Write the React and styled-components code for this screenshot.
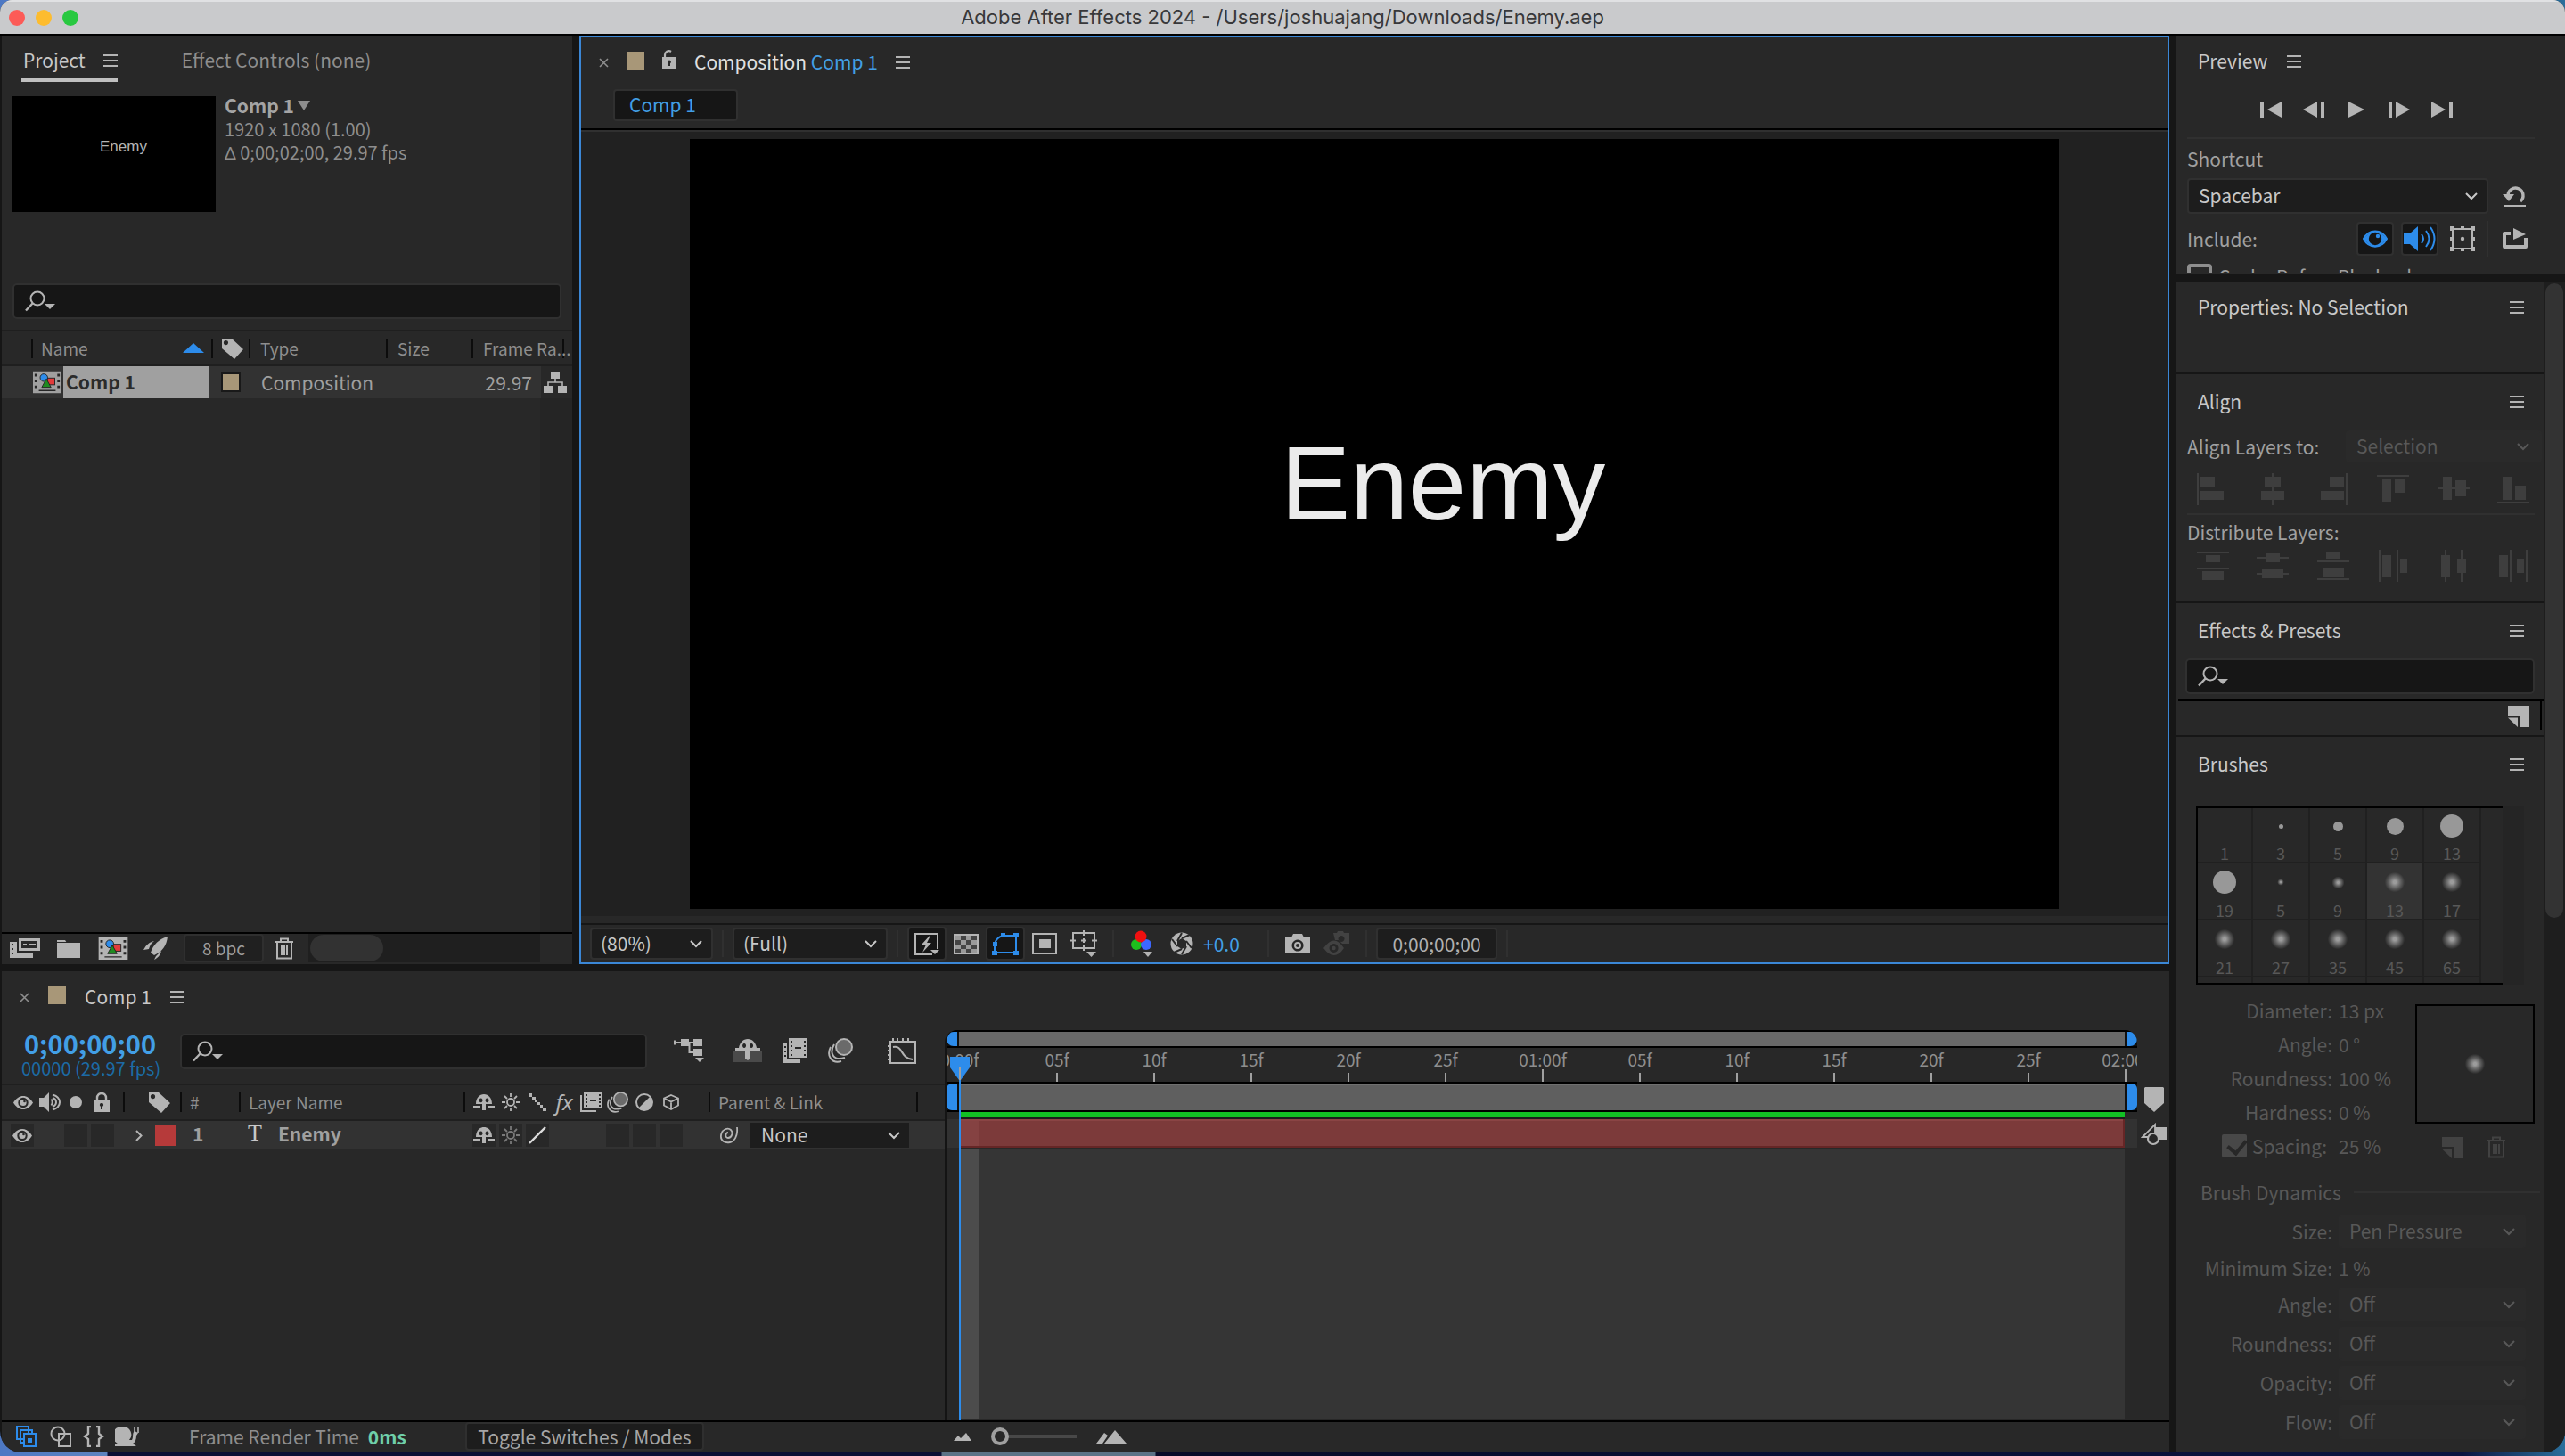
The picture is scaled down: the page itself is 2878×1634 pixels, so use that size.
import React from "react";
import styled, { createGlobalStyle, css } from "styled-components";

const c = {
  frame: "#161616",
  panel: "#282828",
  well: "#161616",
  field: "#1d1d1d",
  edge: "#303030",
  row: "#323232",
  text: "#c8c8c8",
  label: "#a0a0a0",
  dim: "#8e8e8e",
  off: "#585858",
  icon: "#b4b4b4",
  blue: "#2d8ceb",
  link: "#429fe6",
  sand: "#a89778",
};

const Global = createGlobalStyle`
  * { box-sizing: border-box; }
  html, body, #root { height: 100%; }
  body {
    margin: 0;
    overflow: hidden;
    background: linear-gradient(90deg, #4d78c4 0, #5d84c0 120px, #0a0f35 121px, #0a0f35 1056px, #5b7387 1057px, #5b7387 1296px, #070b28 1297px, #0a1440 96%, #2a6f9c 100%);
    font: 21px/28px "Noto Sans CJK SC", "Noto Sans", sans-serif;
    color: ${c.label};
  }
  button, input, select { font: inherit; color: inherit; margin: 0; padding: 0; border: 0; background: none; outline: 0; }
  button { line-height: 28px; text-align: left; white-space: nowrap; }
  svg { display: block; flex: none; }
`;

/* ---------- window ---------- */
const Window = styled.div`
  height: calc(100vh - 4px);
  display: flex;
  flex-direction: column;
  background: ${c.frame};
  border-radius: 14px 14px 24px 24px;
  overflow: hidden;
`;
const TitleBar = styled.header`
  flex: none;
  height: 40px;
  display: grid;
  grid-template-columns: 1fr auto 1fr;
  align-items: center;
  padding: 0 10px;
  background: #c9cacc;
  border-top: 2px solid #e0e1e3;
  border-bottom: 2px solid #000;
`;
const Lights = styled.div`
  display: flex;
  gap: 12px;
`;
const Light = styled.button`
  width: 18px;
  height: 18px;
  border-radius: 50%;
  background: ${(p) => p.$color};
`;
const Title = styled.h1`
  margin: 0;
  padding-bottom: 2px;
  font: 400 22px/28px Inter, "Liberation Sans", sans-serif;
  color: #38383a;
`;
const Workspace = styled.div`
  flex: 1;
  min-height: 0;
  display: grid;
  grid-template-columns: minmax(0, 1fr) 436px;
  gap: 8px;
  padding-left: 2px;
`;
const MainArea = styled.div`
  min-height: 0;
  display: grid;
  grid-template-rows: minmax(0, 1042fr) minmax(0, 540fr);
  gap: 8px;
`;
const TopRow = styled.div`
  min-height: 0;
  display: grid;
  grid-template-columns: 640px minmax(0, 1fr);
  gap: 8px;
`;
const Panel = styled.section`
  background: ${c.panel};
  display: flex;
  flex-direction: column;
  min-width: 0;
  min-height: 0;
  ${(p) => p.$active && css`border: 2px solid #3b87d6;`}
`;

/* ---------- shared parts ---------- */
const Header = styled.div`
  flex: none;
  height: ${(p) => p.$h || 58}px;
  display: flex;
  align-items: center;
  padding: ${(p) => p.$pad || "0 22px 0 24px"};
  gap: ${(p) => p.$gap || "22px"};
`;
const Heading = styled.h2`
  margin: 0;
  padding-bottom: 3px;
  font-size: 21px;
  font-weight: 400;
  line-height: 28px;
  color: ${c.text};
  ${(p) => p.$grow && css`flex: 1;`}
`;
const PlainButton = styled.button`
  flex: none;
  display: flex;
  align-items: center;
  justify-content: center;
  width: ${(p) => p.$w || "auto"};
  height: ${(p) => p.$h || "auto"};
  color: ${(p) => p.$color || c.icon};
`;
const ToolButton = styled.button`
  flex: none;
  display: flex;
  align-items: center;
  justify-content: center;
  width: ${(p) => p.$w || 44}px;
  height: 38px;
  border-radius: 4px;
  border: 2px solid ${(p) => (p.$on ? c.edge : "transparent")};
  background: ${(p) => (p.$on ? c.well : "none")};
  color: ${(p) => p.$color || c.icon};
`;
const Swatch = styled.span`
  flex: none;
  width: ${(p) => p.$size || 20}px;
  height: ${(p) => p.$size || 20}px;
  margin-bottom: ${(p) => p.$lift || 0}px;
  background: ${(p) => p.$color || c.sand};
  ${(p) => p.$framed && css`border: 2px solid #191919;`}
`;
const SearchBox = styled.label`
  display: flex;
  align-items: center;
  gap: 8px;
  height: 40px;
  padding: 0 12px;
  background: ${c.well};
  border: 2px solid ${c.edge};
  border-radius: 5px;
  color: ${c.icon};
  margin: ${(p) => p.$m || "0"};
  ${(p) => p.$w && css`width: ${p.$w};`}
`;
const SearchInput = styled.input`
  flex: 1;
  min-width: 0;
  height: 28px;
`;
const SelectWrap = styled.span`
  display: grid;
  grid-template-columns: minmax(0, 1fr) 14px;
  align-items: center;
  height: ${(p) => p.$h || 36}px;
  padding-right: ${(p) => p.$end || 10}px;
  background: ${(p) => (p.$off ? "#2a2a2a" : c.field)};
  border: ${(p) => (p.$flat ? "0" : `2px solid ${p.$off ? "#2a2a2a" : c.edge}`)};
  border-radius: ${(p) => (p.$flat ? 0 : 4)}px;
  color: ${(p) => (p.$off ? c.off : c.text)};
  ${(p) => p.$w && css`width: ${p.$w}px;`}
  ${(p) => p.$grow && css`flex: 1;`}
`;
const NativeSelect = styled.select`
  appearance: none;
  grid-row: 1;
  grid-column: 1 / 3;
  height: 28px;
  line-height: 26px;
  padding: 0 0 2px ${(p) => p.$start || 10}px;
  &:disabled { opacity: 1; }
`;
const ChevronSlot = styled.span`
  grid-row: 1;
  grid-column: 2;
  pointer-events: none;
`;
const VSep = styled.span`
  flex: none;
  width: 2px;
  height: ${(p) => p.$h || 30}px;
  margin: 0 ${(p) => (p.$m === undefined ? 10 : p.$m)}px;
  background: ${c.edge};
`;
const Rule = styled.hr`
  border: 0;
  height: 2px;
  background: #303030;
  flex: ${(p) => (p.$grow ? 1 : "none")};
  margin: ${(p) => p.$m || "0"};
`;
const Strong = styled.b`
  display: block;
  padding-bottom: 4px;
  font-weight: 700;
`;

/* ---------- icons ---------- */
const Svg = ({ w, h, vb, children, ...rest }) => (
  <svg width={w} height={h} viewBox={vb || `0 0 ${w} ${h}`} fill="currentColor" aria-hidden="true" {...rest}>
    {children}
  </svg>
);
const MenuIcon = () => (
  <Svg w={16} h={14}>
    <path d="M0 0h16v2H0zM0 6h16v2H0zM0 12h16v2H0z" />
  </Svg>
);
const CloseIcon = () => (
  <Svg w={11} h={11}>
    <path d="M1 1l9 9M10 1l-9 9" stroke="#8e8e8e" strokeWidth="1.6" />
  </Svg>
);
const Chevron = () => (
  <Svg w={14} h={9}>
    <path d="M1 1l6 6 6-6" fill="none" stroke="currentColor" strokeWidth="2" />
  </Svg>
);
const SearchIcon = () => (
  <Svg w={34} h={24}>
    <circle cx="14" cy="9" r="7.5" fill="none" stroke="currentColor" strokeWidth="2" />
    <path d="M9 14L1 22.5" stroke="currentColor" strokeWidth="2.4" />
    <path d="M22 15h12l-6 6z" />
  </Svg>
);
const TagIcon = () => (
  <Svg w={24} h={24}>
    <path fillRule="evenodd" d="M0 1h11l13 12-10 11L0 12zM4.5 3a2.6 2.6 0 1 0 0 5.200 2.6 2.6 0 0 0 0-5.200z" />
  </Svg>
);
const FilmComp = ({ w, h }) => (
  <Svg w={w} h={h} vb="0 0 34 26">
    <path d="M0 0h34v26H0z" />
    <path d="M2 3h3v3H2zM2 10h3v3H2zM2 17h3v3H2zM29 3h3v3h-3zM29 10h3v3h-3zM29 17h3v3h-3zM7 22h20v1.500H7z" fill="#262626" />
    <rect x="17" y="8" width="9" height="8" fill="#e23b3b" stroke="#222" />
    <circle cx="13" cy="7.500" r="4.500" fill="#2d8ceb" stroke="#222" />
    <path d="M16 9l5.500 10h-11z" fill="#1f8a1f" stroke="#222" />
  </Svg>
);
const NetworkIcon = () => (
  <Svg w={26} h={24}>
    <path d="M8 0h10v8H8zM0 16h10v8H0zM16 16h10v8H16z" />
    <path d="M13 8v4M5 16v-4h16v4" fill="none" stroke="currentColor" strokeWidth="1.600" />
  </Svg>
);
const InterpretIcon = () => (
  <Svg w={34} h={24}>
    <path fillRule="evenodd" d="M10 1h24v14H10zM13 4v8h18V4z" />
    <path d="M15 7h4v2h-4zM21 7h8v2h-8z" />
    <path fillRule="evenodd" d="M0 5h8v13h18v5H0zM2 7v2h2V7zM2 12v2h2v-2zM2 17v2h2v-2z" />
  </Svg>
);
const FolderIcon = () => (
  <Svg w={26} h={21}>
    <path d="M0 1h9l2 3h15v17H0z" />
    <path d="M0 3.500h11" stroke="#282828" strokeWidth="1" />
  </Svg>
);
const RocketIcon = () => (
  <Svg w={28} h={26}>
    <path d="M27 0C17 3 11 9 8 18l4 3C21 17 26 10 27 0zM12 5C7 6 3 9 0 15l6-1c1-4 3-7 6-9zM12 26c4-2 7-5 8-10l-6 6z" />
  </Svg>
);
const TrashIcon = () => (
  <Svg w={22} h={25}>
    <path d="M7 4V1.500h8V4M1 5h20M3 6v17.500h16V6M8 9v11M11 9v11M14 9v11" fill="none" stroke="currentColor" strokeWidth="2" />
  </Svg>
);
const EyeIcon = () => (
  <Svg w={22} h={15}>
    <path fillRule="evenodd" d="M0 7.500C6-2.500 16-2.500 22 7.500 16 17.500 6 17.500 0 7.500zM11 1.800a5.700 5.700 0 1 0 0 11.400 5.700 5.700 0 0 0 0-11.400z" />
    <circle cx="11" cy="7.500" r="3.600" />
    <circle cx="12.500" cy="6" r="1.300" fill="#282828" />
  </Svg>
);
const BigEyeIcon = () => (
  <Svg w={28} h={20}>
    <path d="M1 10C7 -1.500 21 -1.500 27 10 21 21.500 7 21.500 1 10z" fill="none" stroke="currentColor" strokeWidth="2" />
    <path fillRule="evenodd" d="M1 10L8 3v14zM27 10l-7-7v14z" />
    <circle cx="14" cy="10" r="8" fill="#161616" stroke="currentColor" strokeWidth="1.600" />
    <circle cx="17" cy="7" r="2.200" />
  </Svg>
);
const SpeakerIcon = () => (
  <Svg w={24} h={22}>
    <path d="M0 6h5l6-6v22l-6-6H0z" />
    <path d="M13.500 7.500q2.500 3.500 0 7M15 2.500q8 2.500 8 8.500t-8 8.500M15 6q4 1.500 4 5t-4 5" fill="none" stroke="currentColor" strokeWidth="2" />
  </Svg>
);
const BigSpeakerIcon = () => (
  <Svg w={36} h={28}>
    <path d="M0 8h7l9-8v28l-9-8H0z" />
    <path d="M20 9q4 5 0 10M25 5q7 9 0 18M30 1q9 13 0 26" fill="none" stroke="currentColor" strokeWidth="2" />
  </Svg>
);
const LockIcon = () => (
  <Svg w={18} h={22}>
    <path d="M4 10V6a5 5 0 0 1 10 0v4" fill="none" stroke="currentColor" strokeWidth="2.400" />
    <path fillRule="evenodd" d="M0 9h18v13H0zM9 12a2 2 0 0 0-1 3.800V19h2v-3.200A2 2 0 0 0 9 12z" />
  </Svg>
);
const UnlockIcon = () => (
  <Svg w={16} h={28}>
    <path d="M3 9V6a4.500 4.500 0 0 1 7-4" fill="none" stroke="currentColor" strokeWidth="2.200" />
    <path fillRule="evenodd" d="M0 8h16v13H0zM8 11.500a2 2 0 0 0-1 3.700V18h2v-2.800a2 2 0 0 0-1-3.700z" />
  </Svg>
);
const DotIcon = () => (
  <Svg w={14} h={14}>
    <circle cx="7" cy="7" r="7" />
  </Svg>
);
const ShyIcon = () => (
  <Svg w={24} h={18}>
    <path fillRule="evenodd" d="M3 11C3 4 7 0 12 0s9 4 9 11h-7v7h-4v-7zM8.500 4.500a2 2.400 0 1 0 .1 0zM15.500 4.500a2 2.400 0 1 0 .1 0z" />
    <path d="M0 13h8v2H0zM16 13h8v2h-8z" />
  </Svg>
);
const ShyBigIcon = () => (
  <Svg w={32} h={26}>
    <path d="M0 14h32v12H0z" fill="#4a4a4a" />
    <path fillRule="evenodd" d="M6 10C7 4 11 0 16 0s9 4 10 10h4v3H19v9l-3 2-3-2v-9H2v-3zM12 5a2 2.500 0 1 0 .1 0zM20 5a2 2.500 0 1 0 .1 0z" />
  </Svg>
);
const SunIcon = () => (
  <Svg w={20} h={20}>
    <circle cx="10" cy="10" r="4" fill="none" stroke="currentColor" strokeWidth="1.800" />
    <path d="M10 0v4M10 16v4M0 10h4M16 10h4M3 3l3 3M14 14l3 3M17 3l-3 3M6 14l-3 3" stroke="currentColor" strokeWidth="1.800" />
  </Svg>
);
const StepsIcon = () => (
  <Svg w={20} h={20}>
    <path d="M0 0h4v4H0zM4 4h4v3H4zM7 7h3v3H7zM10 10h3v3h-3zM13 13h3v3h-3zM16 16h4v4h-4z" />
  </Svg>
);
const FilmIcon = () => (
  <Svg w={25} h={22}>
    <path d="M0 3h2v17h16v2H0z" />
    <path fillRule="evenodd" d="M4 0h21v18H4zM6 2v2h2V2zM6 6v2h2V6zM6 10v2h2v-2zM6 14v2h2v-2zM21 2v2h2V2zM21 6v2h2V6zM21 10v2h2v-2zM21 14v2h2v-2zM11 8v2h7V8z" />
  </Svg>
);
const FilmBigIcon = () => (
  <Svg w={28} h={28}>
    <path fillRule="evenodd" d="M0 6h5v18h15v4H0zM2 9v2h2V9zM2 14v2h2v-2zM2 19v2h2v-2z" />
    <path fillRule="evenodd" d="M7 0h21v22H7zM9 3v2h2V3zM9 8v2h2V8zM9 13v2h2v-2zM9 18v2h2v-2zM24 3v2h2V3zM24 8v2h2V8zM24 13v2h2v-2zM24 18v2h2v-2zM14 10v2h7v-2z" />
  </Svg>
);
const BlurIcon = ({ w = 26, h = 24 }) => (
  <Svg w={w} h={h} vb="0 0 28 28">
    <path d="M3 10C-2 20 4 29 15 26M7 7C1 17 6 26 19 22" fill="none" stroke="currentColor" strokeWidth="2" />
    <circle cx="18" cy="10" r="9" fill="#6a6a6a" stroke="currentColor" strokeWidth="2" />
  </Svg>
);
const HalfIcon = () => (
  <Svg w={20} h={20}>
    <circle cx="10" cy="10" r="9" fill="none" stroke="currentColor" strokeWidth="2" />
    <path d="M16.500 3.500A9.200 9.200 0 0 1 3.500 16.500z" />
  </Svg>
);
const CubeIcon = () => (
  <Svg w={18} h={18}>
    <path d="M9 1l8 3.500v8L9 17l-8-4.500v-8zM1 4.500L9 8.500l8-4M9 8.500V17" fill="none" stroke="currentColor" strokeWidth="1.800" />
  </Svg>
);
const SpiralIcon = () => (
  <Svg w={24} h={22}>
    <path d="M12 8c-3 0-4 6 0 6s6-6 3-9S5 4 4 11s5 9 10 8 9-7 8-17" fill="none" stroke="currentColor" strokeWidth="1.800" />
  </Svg>
);
const SlashIcon = () => (
  <Svg w={20} h={20}>
    <path d="M1 19L19 1" stroke="#dcdcdc" strokeWidth="2.400" />
  </Svg>
);
const TwirlIcon = () => (
  <Svg w={8} h={13}>
    <path d="M1 1l5.500 5.500L1 12" fill="none" stroke="currentColor" strokeWidth="2" />
  </Svg>
);
const FlowIcon = () => (
  <Svg w={36} h={26}>
    <path d="M0 1.500h2v5H0zM8 0h9v8H8zM22 0h10v8H22zM22 11h10v8H22z" />
    <path d="M0 4h22M17.500 4v11H22" fill="none" stroke="currentColor" strokeWidth="2" />
    <path d="M24 21h10l-5 5z" />
  </Svg>
);
const GraphIcon = () => (
  <Svg w={32} h={30}>
    <path d="M3 5h28v24H3zM6 1v4M11 1v4M17 1v4M23 1v4M0 10h3M0 15h3M0 20h3M0 25h3" fill="none" stroke="currentColor" strokeWidth="2" />
    <path d="M6 11c12-2 7 12 22 14" fill="none" stroke="currentColor" strokeWidth="2" />
  </Svg>
);
const FastIcon = () => (
  <Svg w={30} h={26}>
    <path d="M21 25H2V2h25v17" fill="none" stroke="currentColor" strokeWidth="2" />
    <path d="M18 4L9 14h5l-4 9 10-11h-5l4-8zM19 20h10l-5 5z" />
  </Svg>
);
const CheckerIcon = () => (
  <Svg w={28} h={23}>
    <path d="M1 1h26v21H1z" fill="#444" stroke="currentColor" strokeWidth="2" />
    <path d="M2 2h6v5H2zM14 2h6v5h-6zM8 7h6v5H8zM20 7h6v5h-6zM2 12h6v5H2zM14 12h6v5h-6zM8 17h6v4H8zM20 17h6v4h-6z" fill="#9a9a9a" />
  </Svg>
);
const MaskIcon = () => (
  <Svg w={30} h={25}>
    <path d="M3 22V12Q5 5 12 3h15v19z" fill="none" stroke="currentColor" strokeWidth="2" />
    <path d="M0 20h6v5H0zM24 20h6v5h-6zM24 0h6v5h-6zM10 0h5v5h-5zM1 10h5v5H1z" />
  </Svg>
);
const RegionIcon = () => (
  <Svg w={28} h={24}>
    <path d="M1 1h26v22H1z" fill="none" stroke="currentColor" strokeWidth="2" />
    <path d="M8 7h13v10H8z" />
  </Svg>
);
const GuidesIcon = () => (
  <Svg w={30} h={30}>
    <path d="M3 3h24v17H3z" fill="none" stroke="currentColor" strokeWidth="2" />
    <path d="M15 0v6M15 17v6M0 11.500h6M24 11.500h6M15 9v5M12 11.500h6" stroke="currentColor" strokeWidth="2" />
    <path d="M18 24h11l-5.500 6z" />
  </Svg>
);
const RgbIcon = () => (
  <Svg w={26} h={30}>
    <circle cx="6" cy="16" r="6" fill="#1dbf1d" />
    <circle cx="17" cy="16" r="6" fill="#3d67ff" />
    <circle cx="11" cy="7" r="6.500" fill="#f01010" />
    <path d="M14 24h10l-5 6z" />
  </Svg>
);
const ApertureIcon = () => (
  <Svg w={26} h={26}>
    <circle cx="13" cy="13" r="12.500" />
    <path d="M13 7l5 3v6l-5 3-5-3v-6z" fill="#282828" />
    <path d="M13 7L22 3M18 10l6 8M18 16l-5 9M13 19l-9 4M8 16L2 8M8 10l5-9" stroke="#282828" strokeWidth="2" />
  </Svg>
);
const CameraIcon = () => (
  <Svg w={28} h={22}>
    <path fillRule="evenodd" d="M0 4h7l2-4h10l2 4h7v18H0zM14 6.500a6.500 6.500 0 1 0 .1 0z" />
    <circle cx="14" cy="13" r="3" fill="none" stroke="currentColor" strokeWidth="2" />
  </Svg>
);
const SnapshotIcon = () => (
  <Svg w={30} h={28}>
    <path fillRule="evenodd" d="M11 2h4l1-2h6l1 2h6v12h-8l-4-4h-4zM20 5a3.500 3.500 0 1 0 .1 0z" />
    <path fillRule="evenodd" d="M0 19q12-17 23 0-11 16-23 0zM11.500 14a5 5 0 1 0 .1 0z" />
    <circle cx="11.500" cy="19" r="2.200" />
  </Svg>
);
const MarkerIcon = () => (
  <Svg w={22} h={28}>
    <path d="M1 0h20l1 1v17L11 28 0 18V1z" />
  </Svg>
);
const KeyShapeIcon = () => (
  <Svg w={30} h={26}>
    <path d="M2 16L16 2v14z" fill="none" stroke="currentColor" strokeWidth="1.800" />
    <path d="M16 5h13v14H16z" />
    <circle cx="14" cy="18" r="6" fill="#282828" stroke="currentColor" strokeWidth="2.200" />
  </Svg>
);
const PlayIcons = {
  first: <Svg w={24} h={18}><path d="M0 0h4v18H0zM24 0v18L8 9z" /></Svg>,
  prev: <Svg w={24} h={18}><path d="M20 0h4v18h-4zM16 0v18L0 9z" /></Svg>,
  play: <Svg w={24} h={18}><path d="M3 0v18l18-9z" /></Svg>,
  next: <Svg w={24} h={18}><path d="M0 0h4v18H0zM8 0v18l16-9z" /></Svg>,
  last: <Svg w={24} h={18}><path d="M20 0h4v18h-4zM0 0v18l16-9z" /></Svg>,
};
const ResetIcon = () => (
  <Svg w={28} h={26}>
    <path d="M6 13a8.500 8.500 0 1 1 14 6" fill="none" stroke="currentColor" strokeWidth="3.400" />
    <path d="M0 11h13l-6 8zM2 23h24v2H2z" />
  </Svg>
);
const LayerBoxIcon = () => (
  <Svg w={28} h={28}>
    <path d="M3 3h22v22H3z" fill="none" stroke="currentColor" strokeWidth="2" />
    <path d="M0 0h5v5H0zM12 0h4v4h-4zM23 0h5v5h-5zM0 12h4v4H0zM24 12h4v4h-4zM0 23h5v5H0zM12 24h4v4h-4zM23 23h5v5h-5z" />
    <circle cx="14" cy="14" r="2.200" />
  </Svg>
);
const ExportIcon = () => (
  <Svg w={28} h={24}>
    <path d="M9 6H2v15h24V11" fill="none" stroke="currentColor" strokeWidth="4" strokeLinejoin="round" />
    <path d="M12 0l14 7-14 6z" />
  </Svg>
);
const NewItemIcon = () => (
  <Svg w={24} h={24}>
    <path d="M0 0h24v24H13V11H0zM0 13.500h11V24z" />
  </Svg>
);
const alignPaths = [
  "M0 0h2v36H0zM4 4h16v12H4zM4 20h26v10H4z",
  "M17 0h2v36h-2zM9 4h18v12H9zM5 20h26v10H5z",
  "M32 0h2v36h-2zM14 4h16v12H14zM4 20h26v10H4z",
  "M0 2h36v2H0zM6 6h10v26H6zM20 6h12v16H20z",
  "M0 16h36v2H0zM6 4h10v26H6zM20 8h12v18H20z",
  "M0 32h36v2H0zM6 4h10v26H6zM20 14h12v16H20z",
];
const distributePaths = [
  "M0 2h36v2H0zM10 6h16v8H10zM0 20h36v2H0zM6 24h24v10H6z",
  "M0 8h36v2H0zM10 4h16v10H10zM0 26h36v2H0zM6 22h24v10H6z",
  "M0 12h36v2H0zM10 2h16v8H10zM0 32h36v2H0zM6 20h24v10H6z",
  "M2 0h2v36H2zM6 6h10v24H6zM22 0h2v36h-2zM26 10h8v16h-8z",
  "M8 0h2v36H8zM4 6h10v24H4zM26 0h2v36h-2zM22 10h10v16H22z",
  "M14 0h2v36h-2zM2 6h10v24H2zM32 0h2v36h-2zM22 10h8v16h-8z",
];

const Menu = ({ label }) => (
  <PlainButton aria-label={label} $h="28px">
    <MenuIcon />
  </PlainButton>
);
const Select = ({ label, id, options, disabled, $start, ...style }) => (
  <SelectWrap {...style} $off={disabled}>
    <NativeSelect id={id} aria-label={label} disabled={disabled} $start={$start}>
      {options.map((o) => (
        <option key={o}>{o}</option>
      ))}
    </NativeSelect>
    <ChevronSlot>
      <Chevron />
    </ChevronSlot>
  </SelectWrap>
);
const Search = ({ label, $m, $w }) => (
  <SearchBox $m={$m} $w={$w}>
    <SearchIcon />
    <SearchInput type="text" aria-label={label} />
  </SearchBox>
);

/* ---------- project panel ---------- */
const Tabs = styled.div`
  flex: none;
  display: flex;
  gap: 70px;
  padding-left: 22px;
`;
const Tab = styled.div`
  display: flex;
  align-items: center;
  gap: 20px;
  height: 52px;
  padding-top: 8px;
  border-bottom: 4px solid ${(p) => (p.$on ? "#c0c0c0" : "transparent")};
`;
const TabLabel = styled.button`
  padding: 0 0 2px 2px;
  color: ${(p) => (p.$on ? c.text : c.dim)};
`;
const Preview = styled.div`
  flex: none;
  display: flex;
  gap: 10px;
  padding: 16px 12px 0;
`;
const Thumb = styled.div`
  width: 228px;
  height: 130px;
  padding: 46px 0 0 98px;
  background: #000;
  color: #b4b4b4;
  font: 17px/22px "Liberation Sans", Arial, sans-serif;
`;
const Meta = styled.div`
  font-size: 20px;
  line-height: 26px;
  color: ${c.dim};
`;
const MetaName = styled.div`
  display: flex;
  align-items: center;
  gap: 4px;
  padding-bottom: 4px;
  font-size: 21px;
  line-height: 20px;
  font-weight: 700;
  color: #a4a4a4;
`;
const Delta = styled.span`
  font-family: "Noto Sans", sans-serif;
`;
const ProjectList = styled.div`
  flex: 1;
  min-height: 0;
  display: flex;
  flex-direction: column;
  margin-top: 12px;
  border-top: 2px solid #1f1f1f;
`;
const Table = styled.table`
  width: 100%;
  table-layout: fixed;
  border-collapse: collapse;
`;
const Th = styled.th`
  height: 38px;
  padding: 0;
  font-size: 19px;
  font-weight: 400;
  text-align: left;
  color: ${c.dim};
  border-bottom: 2px solid #1f1f1f;
`;
const ThInner = styled.div`
  display: flex;
  align-items: center;
  height: 22px;
  line-height: 22px;
  gap: ${(p) => p.$gap || 0}px;
  padding: 0 ${(p) => p.$end || 0}px 0 ${(p) => (p.$start === undefined ? 9 : p.$start)}px;
  margin-right: ${(p) => p.$out || 0}px;
  border-right: 2px solid #0c0c0c;
  white-space: nowrap;
  color: ${(p) => p.$color || "inherit"};
`;
const Td = styled.td`
  height: ${(p) => p.$h || 36}px;
  padding: 0;
  background: ${(p) => (p.$plain ? "none" : c.row)};
  text-align: ${(p) => p.$align || "left"};
  padding-left: ${(p) => p.$start || 0}px;
  padding-right: ${(p) => p.$end || 0}px;
`;
const NameCell = styled.div`
  display: flex;
  align-items: center;
  gap: 2px;
`;
const NameFill = styled.span`
  flex: 1;
  height: 36px;
  margin-right: 4px;
  padding-left: 3px;
  line-height: 34px;
  font-weight: 700;
  color: #2b2b2b;
  background: #a0a0a0;
`;
const SortArrow = styled.span`
  margin-left: auto;
  border: 12px solid transparent;
  border-top: 0;
  border-bottom: 11px solid ${c.blue};
`;
const ListTrack = styled.div`
  flex: 1;
  align-self: flex-end;
  width: 36px;
  background: #252525;
`;
const ProjectFooter = styled.div`
  flex: none;
  display: flex;
  align-items: center;
  height: 36px;
  padding: 0 0 2px 8px;
  border-top: 2px solid #000;
`;
const FooterButton = styled(PlainButton)`
  width: ${(p) => p.$w}px;
  height: 32px;
`;
const DepthButton = styled.button`
  width: 90px;
  height: 32px;
  margin: 0 10px 0 2px;
  border: 2px solid #2f2f2f;
  border-radius: 4px;
  background: #202020;
  font-size: 19px;
  line-height: 28px;
  text-align: center;
  color: #9c9c9c;
`;
const HTrack = styled.div`
  width: 260px;
  height: 32px;
  padding: 1px 2px;
  margin-left: 14px;
  background: #1f1f1f;
`;
const HThumb = styled.div`
  width: 82px;
  height: 30px;
  border-radius: 15px;
  background: #323232;
`;

const ProjectPanel = () => (
  <Panel>
    <Tabs>
      <Tab $on>
        <TabLabel $on>Project</TabLabel>
        <Menu label="Project panel menu" />
      </Tab>
      <Tab>
        <TabLabel>Effect Controls (none)</TabLabel>
      </Tab>
    </Tabs>
    <Preview>
      <Thumb>Enemy</Thumb>
      <Meta>
        <MetaName>
          Comp 1
          <Svg w={14} h={11}><path d="M0 0h14L7 11z" fill="#8e8e8e" /></Svg>
        </MetaName>
        <div>1920 x 1080 (1.00)</div>
        <div><Delta>Δ</Delta> 0;00;02;00, 29.97 fps</div>
      </Meta>
    </Preview>
    <Search label="Search project" $m="80px 12px 0" />
    <ProjectList>
      <Table>
        <colgroup>
          <col style={{ width: 35 }} />
          <col style={{ width: 202 }} />
          <col style={{ width: 42 }} />
          <col style={{ width: 154 }} />
          <col style={{ width: 96 }} />
          <col style={{ width: 76 }} />
          <col />
        </colgroup>
        <thead>
          <tr>
            <Th><ThInner /></Th>
            <Th><ThInner $end={8}>Name<SortArrow /></ThInner></Th>
            <Th><ThInner $start={10} $color={c.icon}><TagIcon /></ThInner></Th>
            <Th><ThInner $start={11}>Type</ThInner></Th>
            <Th><ThInner $start={11}>Size</ThInner></Th>
            <Th colSpan={2}><ThInner $start={11} $out={9}>Frame Ra...</ThInner></Th>
          </tr>
        </thead>
        <tbody>
          <tr>
            <Td />
            <Td>
              <NameCell>
                <FilmComp w={32} h={26} />
                <NameFill>Comp 1</NameFill>
              </NameCell>
            </Td>
            <Td $start={9}><NameCell><Swatch $size={22} $framed /></NameCell></Td>
            <Td $start={12}>Composition</Td>
            <Td />
            <Td $align="right" $end={10}>29.97</Td>
            <Td $plain $start={3}><PlainButton aria-label="Flowchart"><NetworkIcon /></PlainButton></Td>
          </tr>
        </tbody>
      </Table>
      <ListTrack />
    </ProjectList>
    <ProjectFooter>
      <FooterButton $w={36} aria-label="Interpret footage"><InterpretIcon /></FooterButton>
      <FooterButton $w={62} aria-label="New folder"><FolderIcon /></FooterButton>
      <FooterButton $w={38} aria-label="New composition"><FilmComp w={34} h={25} /></FooterButton>
      <FooterButton $w={58} aria-label="Project settings"><RocketIcon /></FooterButton>
      <DepthButton>8 bpc</DepthButton>
      <FooterButton $w={26} aria-label="Delete"><TrashIcon /></FooterButton>
      <HTrack><HThumb /></HTrack>
    </ProjectFooter>
  </Panel>
);

/* ---------- composition panel ---------- */
const CompTitle = styled(Heading)`
  color: #e0e0e0;
`;
const Link = styled.span`
  color: ${c.link};
`;
const CompTabs = styled.div`
  flex: none;
  height: 48px;
  padding: 2px 0 0 36px;
  border-bottom: 2px solid #000;
`;
const CompTab = styled.button`
  width: 140px;
  height: 36px;
  padding: 0 0 2px 16px;
  background: ${c.well};
  border: 2px solid ${c.edge};
  border-radius: 4px;
  color: ${c.link};
`;
const Viewer = styled.div`
  flex: 1;
  min-height: 0;
  display: flex;
  justify-content: center;
  padding: 8px;
  border-top: 2px solid ${c.edge};
  background: #212121;
`;
const Canvas = styled.div`
  position: relative;
  height: 100%;
  aspect-ratio: 16 / 9;
  background: #000;
`;
const CanvasText = styled.span`
  position: absolute;
  left: 663px;
  top: 317px;
  font: 117px/140px "Liberation Sans", Arial, sans-serif;
  color: #ebebeb;
`;
const ViewBar = styled.div`
  flex: none;
  display: flex;
  align-items: center;
  height: 44px;
  margin-top: 8px;
  padding-left: 10px;
  border-top: 2px solid #161616;
`;
const Exposure = styled.button`
  width: 64px;
  padding-left: 2px;
  color: ${c.link};
`;
const TimeField = styled.button`
  width: 136px;
  height: 36px;
  border: 2px solid ${c.edge};
  border-radius: 4px;
  background: ${c.field};
  text-align: center;
  color: #b0b0b0;
`;

const CompositionPanel = () => (
  <Panel $active>
    <Header $h={56} $pad="0 20px" $gap="20px">
      <PlainButton aria-label="Close"><CloseIcon /></PlainButton>
      <Swatch $lift={4} />
      <PlainButton aria-label="Lock"><UnlockIcon /></PlainButton>
      <CompTitle>Composition <Link>Comp 1</Link></CompTitle>
      <Menu label="Composition panel menu" />
    </Header>
    <CompTabs>
      <CompTab>Comp 1</CompTab>
    </CompTabs>
    <Viewer>
      <Canvas>
        <CanvasText>Enemy</CanvasText>
      </Canvas>
    </Viewer>
    <ViewBar>
      <Select label="Magnification" options={["(80%)"]} $w={138} />
      <VSep />
      <Select label="Resolution" options={["(Full)"]} $w={174} />
      <VSep />
      <ToolButton $on aria-label="Fast previews"><FastIcon /></ToolButton>
      <ToolButton aria-label="Transparency grid"><CheckerIcon /></ToolButton>
      <ToolButton $on $color={c.blue} aria-label="Mask visibility"><MaskIcon /></ToolButton>
      <ToolButton aria-label="Region of interest"><RegionIcon /></ToolButton>
      <ToolButton aria-label="Guides"><GuidesIcon /></ToolButton>
      <VSep />
      <ToolButton aria-label="Channels"><RgbIcon /></ToolButton>
      <ToolButton aria-label="Reset exposure"><ApertureIcon /></ToolButton>
      <Exposure>+0.0</Exposure>
      <VSep />
      <ToolButton aria-label="Take snapshot"><CameraIcon /></ToolButton>
      <ToolButton $color="#424242" aria-label="Show snapshot"><SnapshotIcon /></ToolButton>
      <VSep />
      <TimeField>0;00;00;00</TimeField>
      <VSep />
    </ViewBar>
  </Panel>
);

/* ---------- timeline ---------- */
const TimelineBody = styled.div`
  flex: 1;
  min-height: 0;
  display: grid;
  grid-template-columns: 1058px minmax(0, 1fr) 36px;
`;
const LayerArea = styled.div`
  min-height: 0;
`;
const Controls = styled.div`
  display: flex;
  align-items: flex-start;
  height: 68px;
  padding: 12px 0 0 22px;
`;
const TimeBlock = styled.div`
  width: 178px;
  margin-top: -6px;
`;
const BigTime = styled.button`
  display: block;
  padding-left: 3px;
  font-size: 29px;
  font-weight: 700;
  line-height: 32px;
  color: ${c.link};
`;
const SmallTime = styled.div`
  font-size: 20px;
  line-height: 26px;
  color: #1c6ba6;
`;
const ControlIcons = styled.div`
  display: flex;
  align-items: center;
  height: 38px;
  padding-left: 22px;
`;
const LayerTh = styled(Th)`
  height: 40px;
  border-top: 2px solid #1f1f1f;
`;
const Cells = styled.div`
  display: flex;
  align-items: center;
  gap: ${(p) => (p.$gap === undefined ? 4 : p.$gap)}px;
  padding-left: ${(p) => p.$start || 0}px;
`;
const Cell = styled.button`
  flex: none;
  display: flex;
  align-items: center;
  justify-content: center;
  width: 26px;
  height: 26px;
  background: ${(p) => (p.$bare ? "none" : c.panel)};
  color: ${(p) => p.$color || c.icon};
`;
const IconSlot = styled.span`
  flex: none;
  display: flex;
  align-items: center;
  justify-content: center;
  width: ${(p) => p.$w || 30}px;
`;
const Fx = styled.i`
  font: italic 24px/24px "Noto Sans", sans-serif;
`;
const TypeMark = styled.span`
  padding-bottom: 4px;
  font: 26px/28px "Liberation Serif", "Times New Roman", serif;
  color: ${c.text};
`;
const TrackArea = styled.div`
  position: relative;
  min-width: 0;
  margin-top: 8px;
  overflow: hidden;
  border-left: 2px solid #141414;
  border-radius: 14px 14px 0 0;
  display: flex;
  flex-direction: column;
`;
const Range = styled.div`
  flex: none;
  display: grid;
  grid-template-columns: 12px minmax(0, 1fr) 12px;
  gap: 2px;
  height: ${(p) => p.$h}px;
  border-top: 2px solid #000;
  border-bottom: 2px solid #000;
  background: #111;
`;
const Grip = styled.button`
  background: ${c.blue};
  border-radius: ${(p) => (p.$end ? `0 ${p.$r}px ${p.$r}px 0` : `${p.$r}px 0 0 ${p.$r}px`)};
`;
const RangeBar = styled.div`
  background: ${(p) => p.$color};
  border-top: 2px solid ${(p) => p.$top || p.$color};
`;
const Ruler = styled.div`
  flex: none;
  display: flex;
  justify-content: space-between;
  height: 38px;
  padding: 0 12px 0 14px;
`;
const Tick = styled.span`
  width: 2px;
  display: flex;
  flex-direction: column;
  align-items: center;
  justify-content: space-between;
  font-size: 19px;
  line-height: 26px;
  white-space: nowrap;
  color: ${c.dim};
  &::after {
    content: "";
    width: 2px;
    height: ${(p) => (p.$major ? 14 : 10)}px;
    margin-top: ${(p) => (p.$major ? -4 : 0)}px;
    background: #a0a0a0;
  }
`;
const CacheLine = styled.div`
  flex: none;
  height: 8px;
  margin: 0 14px;
  background: #12c024;
  border-bottom: 2px solid #1c1c1c;
`;
const LayerLane = styled.div`
  flex: none;
  padding: 0 14px;
  height: 32px;
  background: ${c.row};
`;
const LayerBar = styled.div`
  height: 32px;
  background: linear-gradient(90deg, #854242 22px, #7c3a3a 22px);
  border: solid #662626;
  border-width: 0 2px 2px 0;
  box-shadow: inset 0 2px #8a4444;
`;
const EmptyLane = styled.div`
  flex: 1;
  margin: 2px 14px 2px;
  background: linear-gradient(90deg, #4c4c4c 22px, #353535 22px);
`;
const Playhead = styled.div`
  position: absolute;
  left: 3px;
  top: 30px;
  bottom: 0;
  width: 24px;
  color: ${c.blue};
  &::after {
    content: "";
    display: block;
    width: 2px;
    height: 100%;
    margin: 0 auto;
    background: ${c.blue};
  }
`;
const Gutter = styled.div`
  display: flex;
  flex-direction: column;
  align-items: center;
  gap: 12px;
  padding: 72px 0 0 1px;
  color: ${c.icon};
`;
const StatusBar = styled.footer`
  flex: none;
  display: flex;
  align-items: center;
  height: 36px;
  padding: 0 0 2px 11px;
  border-top: 2px solid #000;
`;
const StatusText = styled.span`
  margin: 0 66px 0 46px;
  color: ${c.dim};
`;
const Ms = styled.b`
  margin-left: 10px;
  color: #6fcfa9;
`;
const ToggleButton = styled.button`
  width: 268px;
  height: 32px;
  border: 2px solid #2f2f2f;
  border-radius: 4px;
  background: ${c.field};
  text-align: center;
  color: #a6a6a6;
`;
const Zoom = styled.label`
  display: flex;
  align-items: center;
  gap: 22px;
  margin-left: 280px;
  color: ${c.icon};
`;
const ZoomRange = styled.input`
  appearance: none;
  width: 96px;
  height: 20px;
  background: linear-gradient(#484848, #484848) 16px 50% / 80px 4px no-repeat;
  &::-webkit-slider-thumb {
    appearance: none;
    width: 20px;
    height: 20px;
    border: 4px solid #a0a0a0;
    border-radius: 50%;
    background: ${c.panel};
  }
`;

const tickLabels = ["0:00f", "05f", "10f", "15f", "20f", "25f", "01:00f", "05f", "10f", "15f", "20f", "25f", "02:00f"];

const TimelinePanel = () => (
  <Panel>
    <Header $pad="0 20px" $gap="21px">
      <PlainButton aria-label="Close"><CloseIcon /></PlainButton>
      <Swatch $lift={4} />
      <Heading>Comp 1</Heading>
      <Menu label="Timeline panel menu" />
    </Header>
    <TimelineBody>
      <LayerArea>
        <Controls>
          <TimeBlock>
            <BigTime>0;00;00;00</BigTime>
            <SmallTime>00000 (29.97 fps)</SmallTime>
          </TimeBlock>
          <Search label="Search layers" $w="524px" />
          <ControlIcons>
            <PlainButton $w="52px" aria-label="Mini-flowchart"><FlowIcon /></PlainButton>
            <PlainButton $w="78px" aria-label="Hide shy layers"><ShyBigIcon /></PlainButton>
            <PlainButton $w="28px" aria-label="Frame blending"><FilmBigIcon /></PlainButton>
            <PlainButton $w="74px" aria-label="Motion blur"><BlurIcon w={28} h={28} /></PlainButton>
            <PlainButton $w="64px" aria-label="Graph editor"><GraphIcon /></PlainButton>
          </ControlIcons>
        </Controls>
        <Table>
          <colgroup>
            <col style={{ width: 138 }} />
            <col style={{ width: 64 }} />
            <col style={{ width: 66 }} />
            <col style={{ width: 252 }} />
            <col style={{ width: 275 }} />
            <col style={{ width: 233 }} />
            <col />
          </colgroup>
          <thead>
            <tr>
              <LayerTh>
                <ThInner $start={9} $color={c.icon}>
                  <IconSlot><EyeIcon /></IconSlot>
                  <IconSlot><SpeakerIcon /></IconSlot>
                  <IconSlot $w={28}><DotIcon /></IconSlot>
                  <IconSlot><LockIcon /></IconSlot>
                </ThInner>
              </LayerTh>
              <LayerTh><ThInner $start={27} $color={c.icon}><TagIcon /></ThInner></LayerTh>
              <LayerTh><ThInner>#</ThInner></LayerTh>
              <LayerTh><ThInner>Layer Name</ThInner></LayerTh>
              <LayerTh>
                <ThInner $start={6} $color={c.icon}>
                  <IconSlot><ShyIcon /></IconSlot>
                  <IconSlot><SunIcon /></IconSlot>
                  <IconSlot><StepsIcon /></IconSlot>
                  <IconSlot><Fx>fx</Fx></IconSlot>
                  <IconSlot><FilmIcon /></IconSlot>
                  <IconSlot><BlurIcon /></IconSlot>
                  <IconSlot><HalfIcon /></IconSlot>
                  <IconSlot><CubeIcon /></IconSlot>
                </ThInner>
              </LayerTh>
              <LayerTh><ThInner>Parent &amp; Link</ThInner></LayerTh>
              <LayerTh />
            </tr>
          </thead>
          <tbody>
            <tr>
              <Td $h={32}>
                <Cells $start={10}>
                  <Cell aria-label="Video"><EyeIcon /></Cell>
                  <Cell $bare aria-label="Audio" />
                  <Cell aria-label="Solo" />
                  <Cell aria-label="Lock" />
                </Cells>
              </Td>
              <Td $h={32}>
                <Cells $start={12} $gap={14}>
                  <PlainButton aria-label="Expand layer"><TwirlIcon /></PlainButton>
                  <Swatch $size={24} $color="#b63a3a" />
                </Cells>
              </Td>
              <Td $h={32} $start={12}><Strong>1</Strong></Td>
              <Td $h={32}>
                <Cells $start={8} $gap={18}>
                  <TypeMark>T</TypeMark>
                  <Strong>Enemy</Strong>
                </Cells>
              </Td>
              <Td $h={32}>
                <Cells $start={8}>
                  <Cell aria-label="Shy"><ShyIcon /></Cell>
                  <Cell $color="#7a7a7a" aria-label="Collapse"><SunIcon /></Cell>
                  <Cell aria-label="Quality"><SlashIcon /></Cell>
                  <Cell $bare aria-label="Effects" />
                  <Cell $bare aria-label="Frame blending" />
                  <Cell aria-label="Motion blur" />
                  <Cell aria-label="Adjustment layer" />
                  <Cell aria-label="3D layer" />
                </Cells>
              </Td>
              <Td $h={32}>
                <Cells $start={8} $gap={13}>
                  <PlainButton aria-label="Pick whip"><SpiralIcon /></PlainButton>
                  <Select label="Parent layer" options={["None"]} $start={12} $w={178} $h={28} $flat />
                </Cells>
              </Td>
              <Td $h={32} />
            </tr>
          </tbody>
        </Table>
      </LayerArea>
      <TrackArea>
        <Range $h={20}>
          <Grip $r={10} aria-label="Navigator start" />
          <RangeBar $color="#686868" />
          <Grip $r={10} $end aria-label="Navigator end" />
        </Range>
        <Ruler>
          {tickLabels.map((t, i) => (
            <Tick key={i} $major={i % 6 === 0}>{t}</Tick>
          ))}
        </Ruler>
        <Range $h={34}>
          <Grip $r={6} aria-label="Work area start" />
          <RangeBar $color="#5f5f5f" $top="#707070" />
          <Grip $r={6} $end aria-label="Work area end" />
        </Range>
        <CacheLine />
        <LayerLane><LayerBar /></LayerLane>
        <EmptyLane />
        <Playhead>
          <Svg w={24} h={26}>
            <path d="M1 0h22v12L13 26h-2L1 12z" />
            <path d="M11 12h2v14h-2z" fill="#a0a0a0" />
          </Svg>
        </Playhead>
      </TrackArea>
      <Gutter>
        <MarkerIcon />
        <KeyShapeIcon />
      </Gutter>
    </TimelineBody>
    <StatusBar>
      <ToolButton $w={32} $color={c.blue} aria-label="Layer switches">
        <Svg w={24} h={24}>
          <path d="M2 1h13v14H2zM6 5h13v14H6z" fill="none" stroke="currentColor" strokeWidth="2" />
          <path d="M10 9h13v14H10z" fill="#282828" stroke="currentColor" strokeWidth="2" />
          <path d="M14 14h5v5h-5z" />
        </Svg>
      </ToolButton>
      <PlainButton $w="45px" aria-label="Transfer controls">
        <Svg w={24} h={24}>
          <path d="M10 9h13v14H10z" fill="none" stroke="currentColor" strokeWidth="2" />
          <circle cx="9" cy="9" r="7.500" fill="none" stroke="currentColor" strokeWidth="2" />
        </Svg>
      </PlainButton>
      <PlainButton $w="30px" aria-label="In and out">
        <Svg w={24} h={24}>
          <path d="M9 1H6v8l-4 3 4 3v8h3M15 1h3v8l4 3-4 3v8h-3" fill="none" stroke="currentColor" strokeWidth="2.400" />
        </Svg>
      </PlainButton>
      <PlainButton $w="46px" aria-label="Render time">
        <Svg w={28} h={22}>
          <path d="M9 0a9 9 0 0 1 7 15h3c2-3 0-8 3-10l4 2-2 3q0 7-4 9l4 3H0v-2h6A9 9 0 0 1 9 0z" />
          <path d="M22 6V0M26 7V1" stroke="currentColor" strokeWidth="1.600" />
        </Svg>
      </PlainButton>
      <StatusText>Frame Render Time<Ms>0ms</Ms></StatusText>
      <ToggleButton>Toggle Switches / Modes</ToggleButton>
      <Zoom>
        <Svg w={20} h={9}><path d="M0 9l5-6 3 3 6-6 6 9z" /></Svg>
        <ZoomRange type="range" min="0" max="100" defaultValue="0" aria-label="Timeline zoom" />
        <Svg w={34} h={15}><path d="M0 15l9-12 4 3-6 9zM9 15L21 0l13 15z" /></Svg>
      </Zoom>
    </StatusBar>
  </Panel>
);

/* ---------- right column ---------- */
const SideColumn = styled.div`
  display: grid;
  grid-template-rows: 268px minmax(0, 1fr);
  gap: 8px;
  min-height: 0;
`;
const PreviewPanel = styled(Panel)`
  overflow: hidden;
  border-bottom: 2px solid ${c.panel};
`;
const Transport = styled.div`
  flex: none;
  display: flex;
  justify-content: center;
  gap: 24px;
  height: 56px;
  padding: 16px 32px 0 0;
`;
const FieldRow = styled.div`
  flex: none;
  display: flex;
  align-items: center;
  gap: 8px;
  height: ${(p) => p.$h}px;
  padding: 0 ${(p) => (p.$end === undefined ? 34 : p.$end)}px 0 12px;
`;
const Grow = styled.span`
  flex: 1;
`;
const CacheRow = styled.label`
  flex: none;
  display: flex;
  gap: 7px;
  margin-left: 12px;
`;
const CheckBox = styled.input`
  appearance: none;
  flex: none;
  width: 28px;
  height: 28px;
  border: 4px solid #8e8e8e;
  border-radius: 4px;
  &:checked {
    height: 26px;
    border: 0;
    border-radius: 2px;
    background: #484848;
  }
  &:checked::after {
    content: "";
    display: block;
    width: 10px;
    height: 16px;
    margin: 2px 0 0 10px;
    border: solid #282828;
    border-width: 0 4px 4px 0;
    transform: rotate(40deg);
  }
`;
const Stack = styled.div`
  min-height: 0;
  display: grid;
  grid-template-columns: minmax(0, 1fr) 24px;
  background: ${c.panel};
  overflow: hidden;
`;
const StackContent = styled.div`
  min-height: 0;
  overflow: hidden;
`;
const StackTrack = styled.div`
  padding: 2px 2px 0;
  background: #1e1e1e;
`;
const StackThumb = styled.div`
  height: 712px;
  border-radius: 10px;
  background: #333;
`;
const Block = styled.section`
  border-bottom: 2px solid #161616;
  padding-bottom: ${(p) => p.$end || 0}px;
  & + & { padding-top: 2px; }
  &:last-child { border-bottom: 0; }
`;
const IconGrid = styled.div`
  display: grid;
  grid-template-columns: repeat(6, 1fr);
  justify-items: center;
  align-items: center;
  height: ${(p) => p.$h}px;
  padding-left: 7px;
`;
const PresetList = styled.div`
  display: flex;
  justify-content: flex-end;
  align-items: flex-start;
  height: 40px;
  margin: 6px 0 0 2px;
  border-top: 2px solid #000;
`;
const PresetEdge = styled.div`
  height: 32px;
  padding: 5px 12px 0 0;
  margin-right: 2px;
  border-right: 2px solid #000;
`;
const BrushWell = styled.div`
  display: grid;
  grid-template-columns: 344px 24px;
  height: 200px;
  margin: 18px 0 0 22px;
`;
const BrushGrid = styled.div`
  display: grid;
  grid-template-columns: 62px repeat(4, 64px);
  grid-template-rows: 62px 64px 64px 64px;
  overflow: hidden;
  border: solid #000;
  border-width: 2px 0 2px 2px;
`;
const BrushStrip = styled.div`
  background: #252525;
`;
const BrushCell = styled.button`
  display: flex;
  flex-direction: column;
  align-items: center;
  justify-content: flex-end;
  overflow: hidden;
  border: solid #202020;
  border-width: 0 2px 2px 0;
  background: ${(p) => (p.$on ? "#333" : "none")};
  font-size: 18px;
  line-height: 20px;
  color: ${c.off};
`;
const DotBox = styled.span`
  display: flex;
  align-items: center;
  height: 42px;
`;
const BrushDot = styled.span`
  width: ${(p) => p.$size}px;
  height: ${(p) => p.$size}px;
  border-radius: 50%;
  background: ${(p) => (p.$soft ? "radial-gradient(#9c9c9c 10%, rgba(156,156,156,.5) 36%, rgba(156,156,156,0) 66%)" : "#989898")};
`;
const BrushDetail = styled.div`
  display: grid;
  grid-template-columns: minmax(0, 1fr) 134px;
  padding: 10px 10px 0 0;
`;
const PropRow = styled.div`
  display: grid;
  grid-template-columns: 175px minmax(0, 1fr);
  align-items: center;
  gap: 7px;
  height: ${(p) => p.$h || 38}px;
  color: ${c.off};
  white-space: nowrap;
  padding-right: ${(p) => p.$end || 0}px;
`;
const PropLabel = styled.label`
  display: flex;
  align-items: center;
  justify-content: flex-end;
  gap: 6px;
  ${(p) => p.$inset && css`padding-right: 6px;`}
`;
const BrushSample = styled.div`
  display: flex;
  align-items: center;
  justify-content: center;
  width: 134px;
  height: 134px;
  margin-top: 12px;
  border: 2px solid #000;
`;
const SampleActions = styled.div`
  grid-column: 2;
  display: flex;
  align-items: center;
  justify-content: flex-end;
  gap: 26px;
  padding-right: 32px;
  color: #424242;
`;
const Props = styled.div`
  min-width: 0;
  grid-row: 1 / 3;
`;
const DynamicsHead = styled.div`
  display: flex;
  align-items: center;
  gap: 14px;
  height: 45px;
  margin-top: 10px;
  padding: 0 4px 0 27px;
  color: ${c.off};
`;

const brushes = [
  ["1", 0], ["3", 5], ["5", 11], ["9", 19], ["13", 26],
  ["19", 26], ["5", 8, 1], ["9", 15, 1], ["13", 24, 1, 1], ["17", 24, 1],
  ["21", 24, 1], ["27", 24, 1], ["35", 24, 1], ["45", 24, 1], ["65", 24, 1],
];

const BlockHead = ({ title }) => (
  <Header>
    <Heading $grow>{title}</Heading>
    <Menu label={`${title} menu`} />
  </Header>
);

const SidePanels = () => (
  <SideColumn>
    <PreviewPanel>
      <Header>
        <Heading>Preview</Heading>
        <Menu label="Preview menu" />
      </Header>
      <Transport>
        {Object.entries(PlayIcons).map(([k, icon]) => (
          <PlainButton key={k} $h="18px" aria-label={k}>{icon}</PlainButton>
        ))}
      </Transport>
      <Rule $m="0 34px 0 12px" />
      <FieldRow $h={44}><label htmlFor="shortcut">Shortcut</label></FieldRow>
      <FieldRow $h={40}>
        <Select id="shortcut" options={["Spacebar"]} $start={11} $grow $h={40} />
        <PlainButton $w="44px" aria-label="Reset"><ResetIcon /></PlainButton>
      </FieldRow>
      <FieldRow $h={56}>
        <Grow>Include:</Grow>
        <ToolButton $w={42} $on $color={c.blue} aria-label="Include video"><BigEyeIcon /></ToolButton>
        <ToolButton $w={42} $on $color={c.blue} aria-label="Include audio"><BigSpeakerIcon /></ToolButton>
        <ToolButton $w={38} aria-label="Include overlays"><LayerBoxIcon /></ToolButton>
        <VSep $m={0} $h={40} />
        <PlainButton $w="44px" aria-label="Export"><ExportIcon /></PlainButton>
      </FieldRow>
      <CacheRow>
        <CheckBox type="checkbox" />
        Cache Before Playback
      </CacheRow>
    </PreviewPanel>
    <Stack>
      <StackContent>
        <Block $end={44}>
          <BlockHead title="Properties: No Selection" />
        </Block>
        <Block $end={21}>
          <BlockHead title="Align" />
          <FieldRow $h={42} $end={2}>
            <label htmlFor="align-to">Align Layers to:</label>
            <Grow />
            <Select id="align-to" options={["Selection"]} $w={220} $end={12} disabled />
          </FieldRow>
          <IconGrid $h={54}>
            {alignPaths.map((d) => (
              <PlainButton key={d} $color="#3e3e3e" aria-label="Align"><Svg w={36} h={36}><path d={d} /></Svg></PlainButton>
            ))}
          </IconGrid>
          <Rule $m="0 10px 0 12px" />
          <FieldRow $h={38}>Distribute Layers:</FieldRow>
          <IconGrid $h={38}>
            {distributePaths.map((d) => (
              <PlainButton key={d} $color="#3e3e3e" aria-label="Distribute"><Svg w={36} h={36}><path d={d} /></Svg></PlainButton>
            ))}
          </IconGrid>
        </Block>
        <Block>
          <BlockHead title="Effects & Presets" />
          <Search label="Search effects" $m="2px 10px 0" />
          <PresetList>
            <PresetEdge>
              <PlainButton aria-label="New animation preset"><NewItemIcon /></PlainButton>
            </PresetEdge>
          </PresetList>
        </Block>
        <Block>
          <BlockHead title="Brushes" />
          <BrushWell>
            <BrushGrid>
              {brushes.map(([n, size, soft, on], i) => (
                <BrushCell key={i} $on={on} aria-label={`Brush ${n}`}>
                  <DotBox><BrushDot $size={size} $soft={soft} /></DotBox>
                  {n}
                </BrushCell>
              ))}
              {[0, 1, 2, 3, 4].map((i) => <BrushCell key={`r${i}`} aria-label="Brush" />)}
            </BrushGrid>
            <BrushStrip />
          </BrushWell>
          <BrushDetail>
            <Props>
              <PropRow><PropLabel as="span">Diameter:</PropLabel><span>13 px</span></PropRow>
              <PropRow><PropLabel as="span">Angle:</PropLabel><span>0 °</span></PropRow>
              <PropRow><PropLabel as="span">Roundness:</PropLabel><span>100 %</span></PropRow>
              <PropRow><PropLabel as="span">Hardness:</PropLabel><span>0 %</span></PropRow>
              <PropRow>
                <PropLabel $inset><CheckBox type="checkbox" defaultChecked />Spacing:</PropLabel>
                <span>25 %</span>
              </PropRow>
            </Props>
            <BrushSample><BrushDot $size={24} $soft /></BrushSample>
            <SampleActions>
              <PlainButton $color="#424242" aria-label="New brush"><NewItemIcon /></PlainButton>
              <PlainButton $color="#424242" aria-label="Delete brush"><TrashIcon /></PlainButton>
            </SampleActions>
          </BrushDetail>
          <DynamicsHead>Brush Dynamics<Rule $grow /></DynamicsHead>
          <PropRow $h={44} $end={20}>
            <PropLabel htmlFor="dyn-size">Size:</PropLabel>
            <Select id="dyn-size" options={["Pen Pressure"]} $h={38} disabled />
          </PropRow>
          <PropRow><PropLabel as="span">Minimum Size:</PropLabel><span>1 %</span></PropRow>
          {["Angle", "Roundness", "Opacity", "Flow"].map((n) => (
            <PropRow key={n} $h={44} $end={20}>
              <PropLabel htmlFor={`dyn-${n}`}>{n}:</PropLabel>
              <Select id={`dyn-${n}`} options={["Off"]} $h={38} disabled />
            </PropRow>
          ))}
        </Block>
      </StackContent>
      <StackTrack><StackThumb /></StackTrack>
    </Stack>
  </SideColumn>
);

export default function App() {
  return (
    <>
      <Global />
      <Window>
        <TitleBar>
          <Lights>
            <Light $color="#fc5b57" aria-label="Close window" />
            <Light $color="#fdbc2e" aria-label="Minimize window" />
            <Light $color="#28c840" aria-label="Zoom window" />
          </Lights>
          <Title>Adobe After Effects 2024 - /Users/joshuajang/Downloads/Enemy.aep</Title>
        </TitleBar>
        <Workspace>
          <MainArea>
            <TopRow>
              <ProjectPanel />
              <CompositionPanel />
            </TopRow>
            <TimelinePanel />
          </MainArea>
          <SidePanels />
        </Workspace>
      </Window>
    </>
  );
}
